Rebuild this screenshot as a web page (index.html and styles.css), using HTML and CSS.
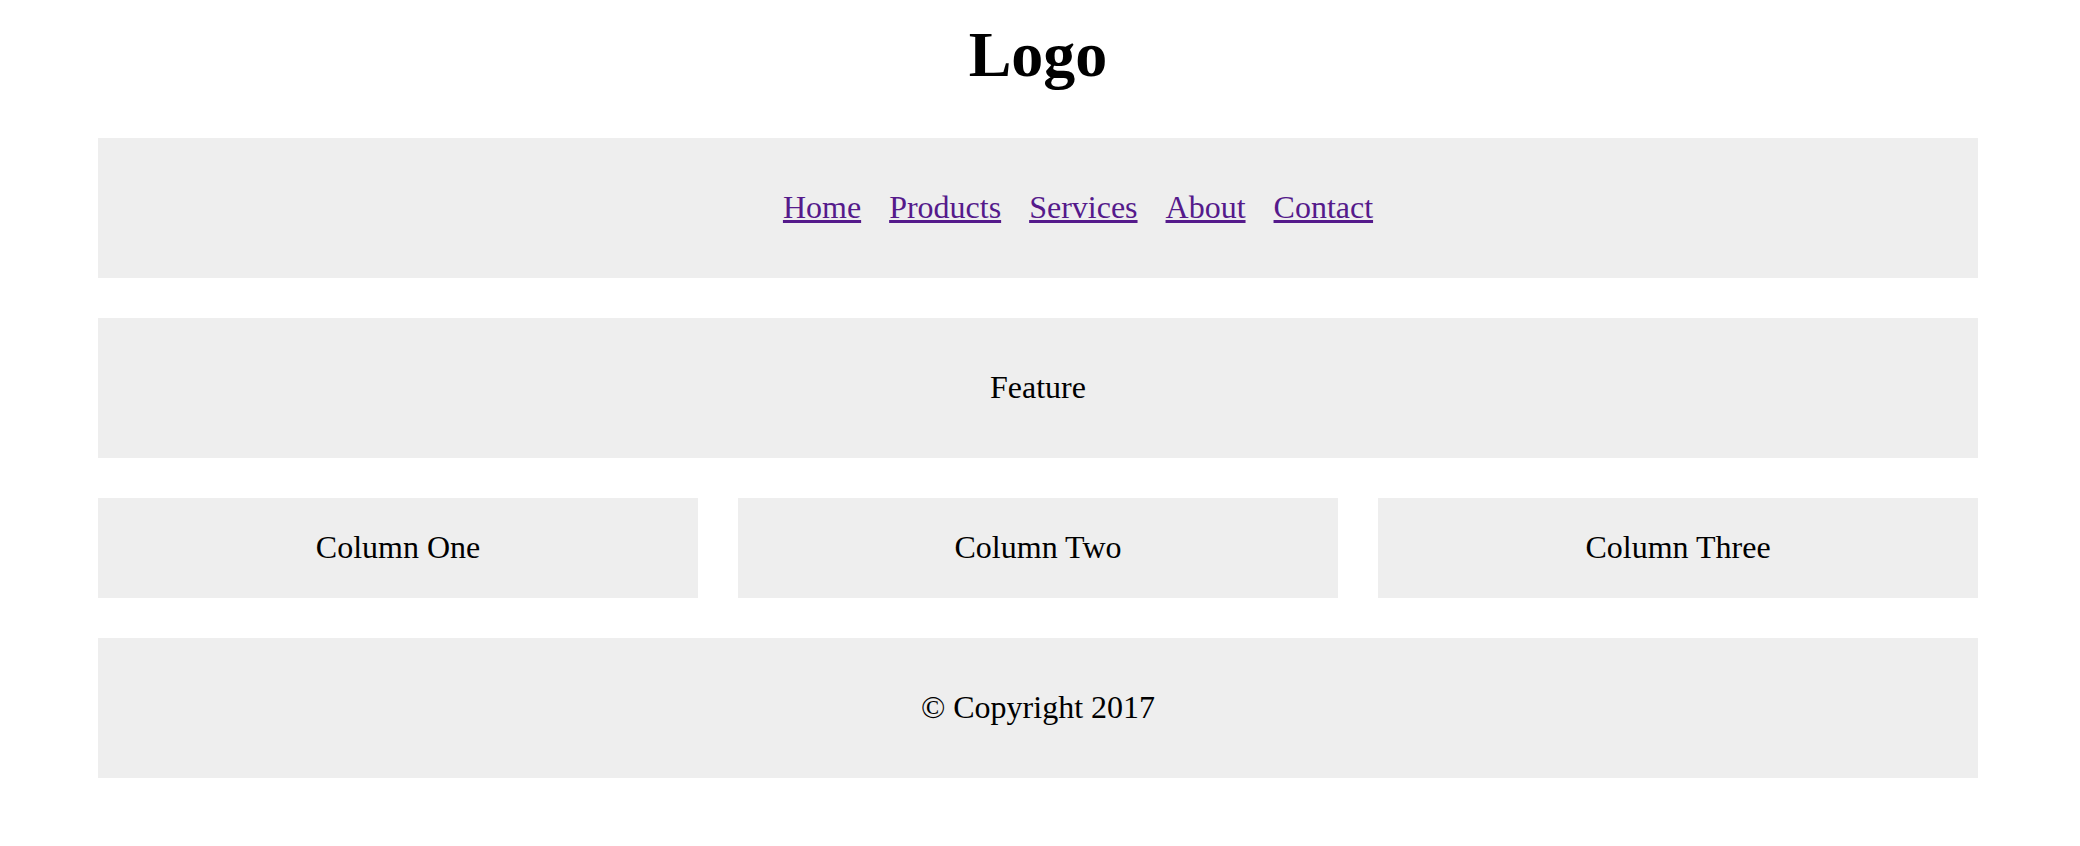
FILE: index.html
```html
<!DOCTYPE html>
<html lang="en">
<head>
<meta charset="utf-8">
<title>Logo</title>
<link rel="stylesheet" href="styles.css">
</head>
<body>
<div class="page">
  <h1 class="logo">Logo</h1>
  <div class="stack">
    <nav class="box nav">
      <a href="#">Home</a>
      <a href="#">Products</a>
      <a href="#">Services</a>
      <a href="#">About</a>
      <a href="#">Contact</a>
    </nav>
    <section class="box feature">Feature</section>
    <div class="columns">
      <div class="col">Column One</div>
      <div class="col">Column Two</div>
      <div class="col">Column Three</div>
    </div>
    <footer class="box footer">© Copyright 2017</footer>
  </div>
</div>
</body>
</html>
```

FILE: styles.css
```css
html, body {
  margin: 0;
  padding: 0;
  background: #fff;
}

body {
  font-family: "Liberation Serif", "Times New Roman", serif;
  font-size: 32px;
  color: #000;
}

.page {
  padding: 0 102px 0 98px;
}

.logo {
  margin: 0 0 46px;
  padding-top: 18px;
  font-size: 64px;
  font-weight: bold;
  line-height: 74px;
  text-align: center;
}

.stack {
  display: flex;
  flex-direction: column;
  gap: 40px;
}

.box {
  box-sizing: border-box;
  background: #eee;
  height: 140px;
  line-height: 138px;
  text-align: center;
}

.nav {
  display: flex;
  justify-content: center;
  gap: 28px;
  padding-left: 80px;
}

.nav a {
  color: #551a8b;
  text-decoration: underline;
}

.columns {
  display: flex;
  gap: 40px;
}

.col {
  flex: 1 1 0;
  background: #eee;
  height: 100px;
  line-height: 98px;
  text-align: center;
}
```
